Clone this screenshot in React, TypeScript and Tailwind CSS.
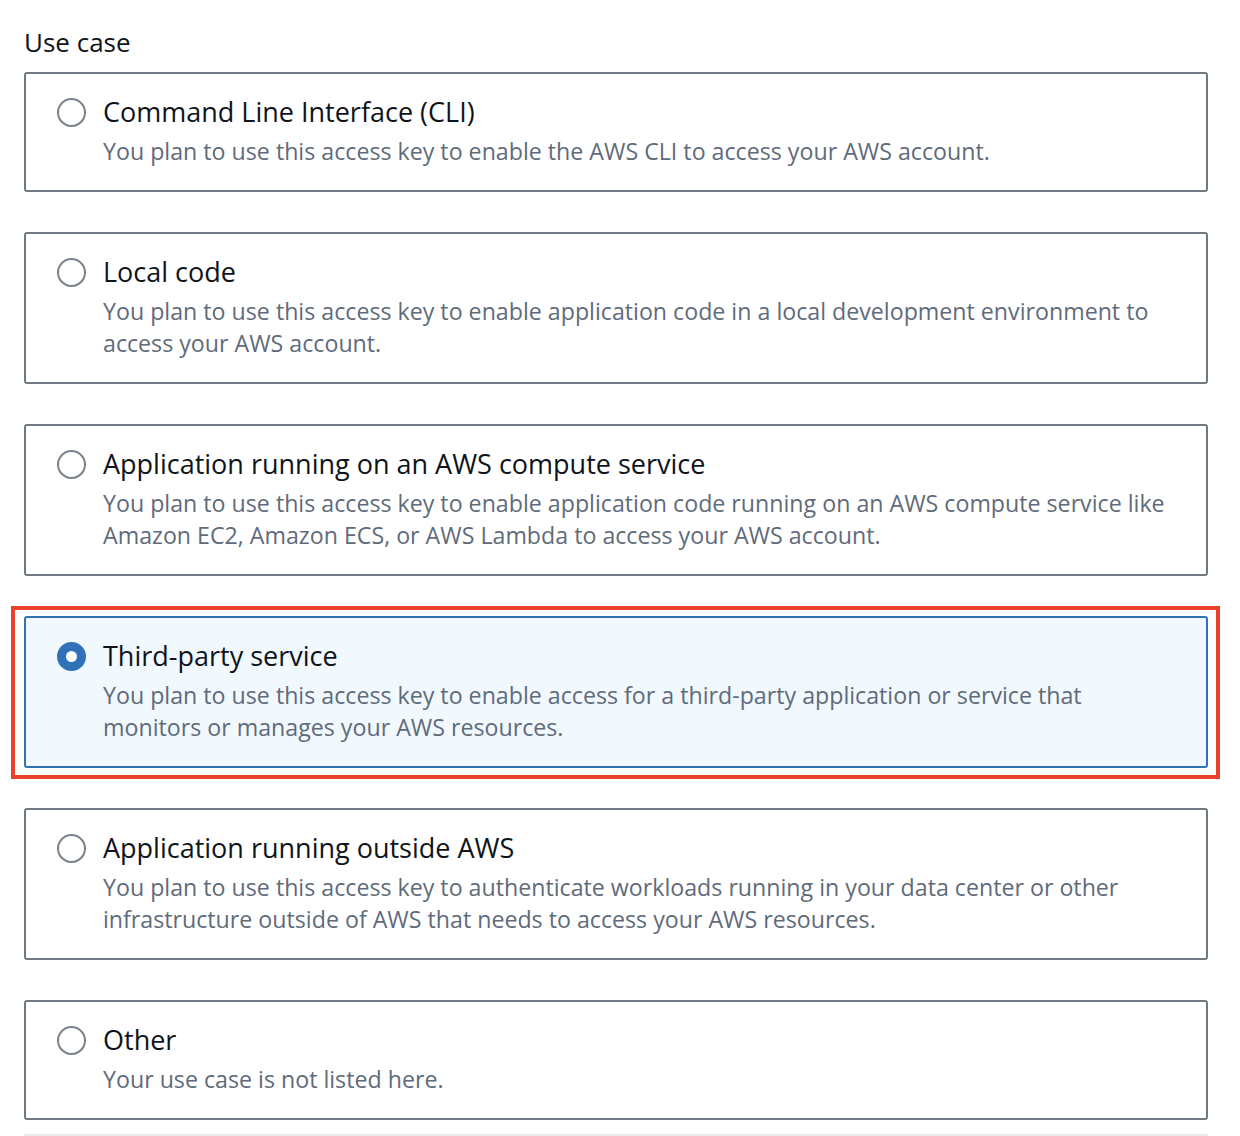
type UseCase = {
  id: string;
  title: string;
  description: string;
};

const useCases: UseCase[] = [
  {
    id: "cli",
    title: "Command Line Interface (CLI)",
    description:
      "You plan to use this access key to enable the AWS CLI to access your AWS account.",
  },
  {
    id: "local",
    title: "Local code",
    description:
      "You plan to use this access key to enable application code in a local development environment to access your AWS account.",
  },
  {
    id: "compute",
    title: "Application running on an AWS compute service",
    description:
      "You plan to use this access key to enable application code running on an AWS compute service like Amazon EC2, Amazon ECS, or AWS Lambda to access your AWS account.",
  },
  {
    id: "third-party",
    title: "Third-party service",
    description:
      "You plan to use this access key to enable access for a third-party application or service that monitors or manages your AWS resources.",
  },
  {
    id: "outside",
    title: "Application running outside AWS",
    description:
      "You plan to use this access key to authenticate workloads running in your data center or other infrastructure outside of AWS that needs to access your AWS resources.",
  },
  {
    id: "other",
    title: "Other",
    description: "Your use case is not listed here.",
  },
];

function Radio({ checked }: { checked: boolean }) {
  if (checked) {
    return (
      <span className="flex h-[29px] w-[29px] shrink-0 items-center justify-center rounded-full bg-[#2f72b8]">
        <span className="h-[11px] w-[11px] rounded-full bg-white" />
      </span>
    );
  }
  return (
    <span className="h-[29px] w-[29px] shrink-0 rounded-full border-[2.5px] border-[#7a818b] bg-white" />
  );
}

export default function App() {
  const selected = "third-party";

  return (
    <div
      className="min-h-[1136px] bg-white pl-6 pr-8 pt-[24px] text-[#000716]"
      style={{ fontFamily: '"Open Sans", "Noto Sans", "Liberation Sans", sans-serif' }}
    >
      <div className="text-[26px] leading-[36px] text-[#0f141a]">Use case</div>
      <div className="mt-[12px] flex flex-col gap-10">
        {useCases.map((item) => {
          const isSelected = item.id === selected;
          return (
            <div key={item.id} className="relative">
              <div
                className={
                  isSelected
                    ? "flex gap-[17px] rounded-[3px] border-2 border-[#2f72b8] bg-[#f1f8fe] pb-[23px] pl-[31px] pr-8 pt-5"
                    : "flex gap-[17px] rounded-[3px] border-2 border-[#707883] bg-white pb-[23px] pl-[31px] pr-8 pt-5"
                }
              >
                <div className="flex h-9 items-center">
                  <Radio checked={isSelected} />
                </div>
                <div className="min-w-0 flex-1">
                  <div className="text-[27px] leading-9 text-[#0f141a]">{item.title}</div>
                  <div className="mt-[5px] text-[23.2px] leading-8 text-[#5f6b7a]">
                    {item.description}
                  </div>
                </div>
              </div>
              {isSelected && (
                <div className="pointer-events-none absolute -bottom-[11px] -left-[13px] -right-[12px] -top-[10px] border-4 border-[#e7432a]" />
              )}
            </div>
          );
        })}
      </div>
      <div className="mt-[14px] h-[2px] bg-[#e9ebed]" />
    </div>
  );
}
